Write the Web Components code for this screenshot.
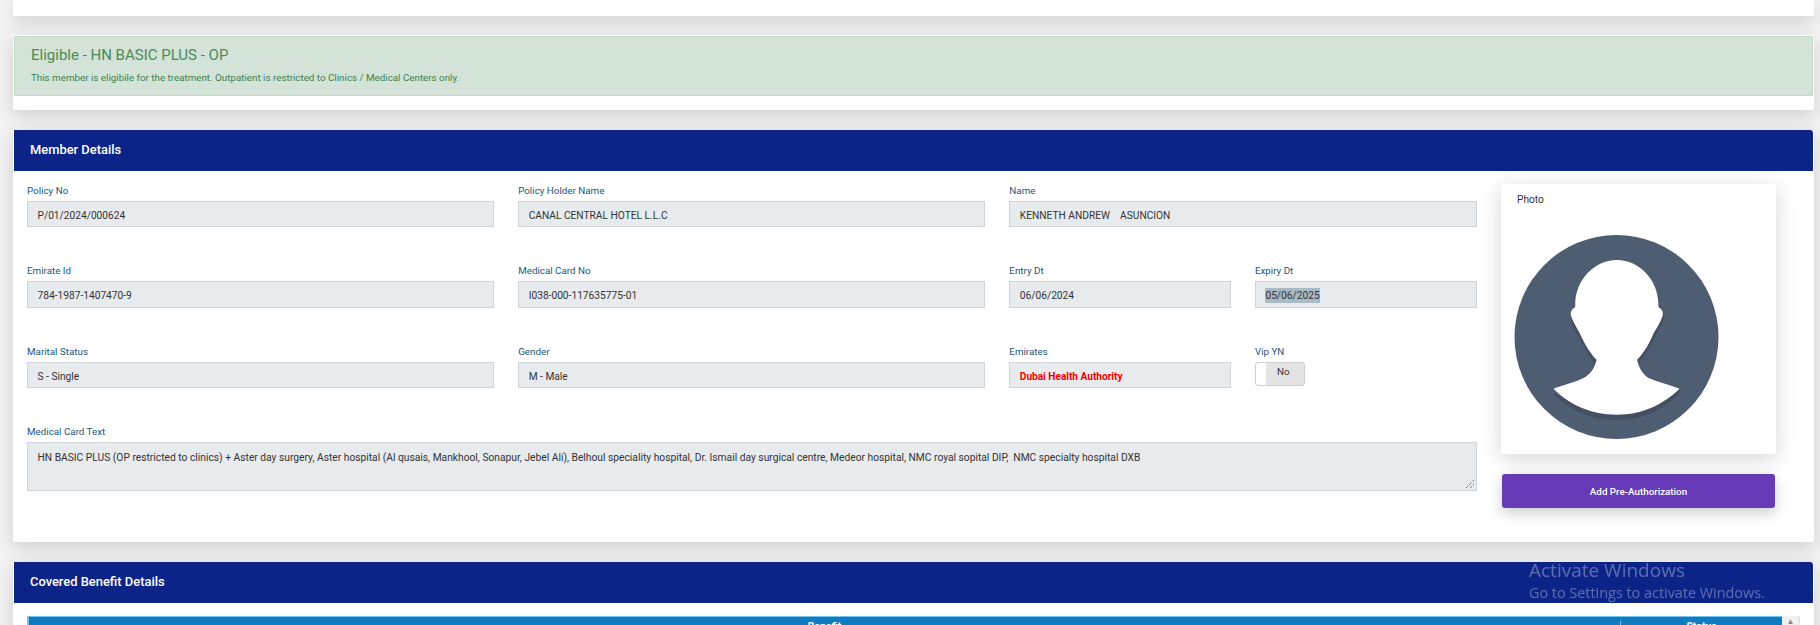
<!DOCTYPE html>
<html>
<head>
<meta charset="utf-8">
<title>Member Details</title>
<style>
    html, body { margin: 0; height: 625px; overflow: hidden; }
    body {
        background: #f3f3f3;
        font-family: Roboto, "Liberation Sans", sans-serif;
        display: flex;
        flex-direction: column;
        padding: 0 6px 0 13px;
        box-sizing: border-box;
    }
</style>
</head>
<body>
<app-card style="height:16px;margin-bottom:19px"></app-card>

<app-card style="height:75px;margin-bottom:20px">
    <alert-box heading="Eligible - HN BASIC PLUS - OP">This member is eligibile for the treatment. Outpatient is restricted to Clinics / Medical Centers only.</alert-box>
</app-card>

<app-card style="height:412px;margin-bottom:20px">
    <section-header>Member Details</section-header>
    <member-form>
        <form-field span="2" label="Policy No">P/01/2024/000624</form-field>
        <form-field span="2" label="Policy Holder Name">CANAL CENTRAL HOTEL L.L.C</form-field>
        <form-field span="2" label="Name">KENNETH ANDREW    ASUNCION</form-field>
        <form-field span="2" label="Emirate Id" tall>784-1987-1407470-9</form-field>
        <form-field span="2" label="Medical Card No" tall>I038-000-117635775-01</form-field>
        <form-field label="Entry Dt" tall>06/06/2024</form-field>
        <form-field label="Expiry Dt" tall selected>05/06/2025</form-field>
        <form-field span="2" label="Marital Status">S - Single</form-field>
        <form-field span="2" label="Gender">M - Male</form-field>
        <form-field label="Emirates" danger>Dubai Health Authority</form-field>
        <form-field label="Vip YN" plain><toggle-switch>No</toggle-switch></form-field>
        <form-field span="6" label="Medical Card Text" multiline>HN BASIC PLUS (OP restricted to clinics) + Aster day surgery, Aster hospital (Al qusais, Mankhool, Sonapur, Jebel Ali), Belhoul speciality hospital, Dr. Ismail day surgical centre, Medeor hospital, NMC royal sopital DIP,  NMC specialty hospital DXB</form-field>
        <photo-card slot="side">Photo</photo-card>
        <action-button slot="side">Add Pre-Authorization</action-button>
    </member-form>
</app-card>

<app-card style="flex:none;height:200px">
    <section-header>Covered Benefit Details</section-header>
    <benefit-table></benefit-table>
</app-card>

<activate-notice></activate-notice>

<script>
class AppCard extends HTMLElement {
    connectedCallback() {
        this.attachShadow({ mode: 'open' }).innerHTML = `
            <style>
                :host {
                    display: block;
                    flex: none;
                    background: #fff;
                    box-sizing: border-box;
                    padding: 0 1px;
                    box-shadow: 0 6px 18px rgba(0,0,0,0.15);
                }
            </style>
            <slot></slot>`;
    }
}

class AlertBox extends HTMLElement {
    connectedCallback() {
        this.attachShadow({ mode: 'open' }).innerHTML = `
            <style>
                :host {
                    display: block;
                    height: 60px;
                    margin-top: 1px;
                    box-sizing: border-box;
                    padding: 9px 16px 0 16px;
                    background: #d4e3d7;
                    border: 1px solid #c5d9cb;
                    color: #3f7f4f;
                }
                h4 { margin: 0 0 8px; font-size: 15px; line-height: 18px; font-weight: 400; color: #4a8a5a; }
                p { margin: 0; font-size: 9.8px; line-height: 12px; }
            </style>
            <h4>${this.getAttribute('heading')}</h4>
            <p><slot></slot></p>`;
    }
}

class SectionHeader extends HTMLElement {
    connectedCallback() {
        this.attachShadow({ mode: 'open' }).innerHTML = `
            <style>
                :host {
                    display: flex;
                    align-items: center;
                    height: 41px;
                    box-sizing: border-box;
                    padding: 0 0 2px 16px;
                    background: #0c2488;
                    border-top-right-radius: 3px;
                    color: #fff;
                    font-size: 12.9px;
                    font-weight: 500;
                }
            </style>
            <slot></slot>`;
    }
}

class MemberForm extends HTMLElement {
    connectedCallback() {
        this.attachShadow({ mode: 'open' }).innerHTML = `
            <style>
                :host { display: flex; padding: 13px 0 0 13px; gap: 24px; }
                .fields {
                    width: 1450px;
                    display: grid;
                    grid-template-columns: repeat(5, 221.6fr) 222.1fr;
                    grid-template-rows: 80px 81px 80px auto;
                    column-gap: 24px;
                }
                .side { width: 275px; display: flex; flex-direction: column; gap: 20px; }
            </style>
            <div class="fields"><slot></slot></div>
            <div class="side"><slot name="side"></slot></div>`;
    }
}

class FormField extends HTMLElement {
    connectedCallback() {
        const span = this.getAttribute('span') || 1;
        const value = this.hasAttribute('selected') ? '<span class="sel"><slot></slot></span>' : '<slot></slot>';
        const box = this.hasAttribute('plain') ? '<slot></slot>' : `<div class="box">${value}${this.hasAttribute('multiline') ? `
            <svg class="grip" width="10" height="10" viewBox="0 0 10 10"><path d="M1 9 9 1M5 9 9 5" stroke="#444" stroke-width="1" stroke-dasharray="1 1" fill="none"/></svg>` : ''}</div>`;
        this.attachShadow({ mode: 'open' }).innerHTML = `
            <style>
                :host { display: block; grid-column: span ${span}; min-width: 0; }
                label { display: block; height: 17px; font-size: 9.8px; line-height: 14px; color: #1d5678; }
                .box {
                    position: relative;
                    height: 26px;
                    box-sizing: border-box;
                    padding: 0 9.5px;
                    background: #e8ebee;
                    border: 1px solid #d0d5d9;
                    font-size: 10.2px;
                    line-height: 27px;
                    color: #333;
                    white-space: pre-wrap;
                }
                :host([tall]) .box { height: 27px; }
                :host([danger]) .box { color: #f00000; font-weight: 700; font-size: 10.1px; }
                :host([multiline]) .box { height: 49px; padding-top: 3px; line-height: 24px; font-size: 10.25px; }
                .sel { background: #a9b9c6; padding: 2px 0; }
                .grip { position: absolute; right: 1px; bottom: 1px; }
            </style>
            <label>${this.getAttribute('label')}</label>
            ${box}`;
    }
}

class ToggleSwitch extends HTMLElement {
    connectedCallback() {
        this.attachShadow({ mode: 'open' }).innerHTML = `
            <style>
                :host {
                    display: flex;
                    width: 50px;
                    height: 24px;
                    box-sizing: border-box;
                    background: #e4e4e4;
                    border: 1px solid #cfcfcf;
                    border-radius: 3px;
                    font-size: 9.8px;
                    color: #333;
                }
                .knob { width: 10px; background: #fff; border-radius: 3px 0 0 3px; }
                .text { flex: 1; text-align: center; line-height: 17px; padding-right: 3px; }
            </style>
            <div class="knob"></div>
            <div class="text"><slot></slot></div>`;
    }
}

class PhotoCard extends HTMLElement {
    connectedCallback() {
        this.attachShadow({ mode: 'open' }).innerHTML = `
            <style>
                :host {
                    display: block;
                    height: 270px;
                    box-sizing: border-box;
                    padding: 10px 0 0 16px;
                    background: #fff;
                    box-shadow: 0 5px 20px rgba(0,0,0,0.17);
                    font-size: 10.2px;
                    line-height: 12px;
                    color: #333;
                }
                svg { display: block; margin: 29px 0 0 -3px; }
            </style>
            <slot></slot>
            <svg width="205" height="204" viewBox="102 195 614 613">
                <defs>
                    <clipPath id="disc"><circle cx="409" cy="501.5" r="306.5"/></clipPath>
                    <path id="bust" d="M410 270C341 270 287 331 285 400L285 412C272 418 268 432 275 445C282 462 290 475 297 487C310 515 325 545 349 570C345 590 335 612 310 625C285 638 250 645 220 657C265 705 335 735 410 735C485 735 550 705 598 657C570 645 535 638 505 625C485 612 475 590 471 570C495 545 510 515 522 487C530 475 538 462 545 445C552 432 548 418 535 412L535 400C533 331 479 270 410 270Z"/>
                </defs>
                <circle cx="409" cy="501.5" r="306.5" fill="#4f5d73"/>
                <use href="#bust" y="16" fill="#454f62" clip-path="url(#disc)"/>
                <use href="#bust" x="4" y="8" fill="#454f62" clip-path="url(#disc)"/>
                <use href="#bust" fill="#fff"/>
            </svg>`;
    }
}

class ActionButton extends HTMLElement {
    connectedCallback() {
        this.attachShadow({ mode: 'open' }).innerHTML = `
            <style>
                :host {
                    display: flex;
                    align-items: center;
                    justify-content: center;
                    height: 34px;
                    margin: 0 1px;
                    background: #673ab7;
                    border-radius: 3px;
                    box-shadow: 0 5px 14px rgba(0,0,0,0.2);
                    color: #fff;
                    font-size: 9.8px;
                    font-weight: 500;
                }
            </style>
            <slot></slot>`;
    }
}

class BenefitTable extends HTMLElement {
    connectedCallback() {
        this.attachShadow({ mode: 'open' }).innerHTML = `
            <style>
                :host { display: flex; margin: 13px 13px 0 13px; height: 40px; }
                .head {
                    flex: 1;
                    display: flex;
                    background: #0f7cc2;
                    border-top: 1px solid #74c3ee;
                    border-left: 2px solid #74c3ee;
                    color: #fff;
                    font-size: 10.4px;
                    font-weight: 700;
                    line-height: 12px;
                    padding-top: 4px;
                }
                .benefit { flex: 1; text-align: center; }
                .status { width: 161px; text-align: center; border-left: 1px solid #7fbfe6; }
                .bar { width: 18px; background: #f1f1f1; color: #888; font-size: 8px; text-align: center; line-height: 12px; border-right: 1px solid #dde; box-sizing: border-box; }
            </style>
            <div class="head"><div class="benefit">Benefit</div><div class="status">Status</div></div>
            <div class="bar">▲</div>`;
    }
}

class ActivateNotice extends HTMLElement {
    connectedCallback() {
        this.attachShadow({ mode: 'open' }).innerHTML = `
            <style>
                :host {
                    position: fixed;
                    left: 1529px;
                    top: 557px;
                    color: rgba(255,255,255,0.33);
                    font-family: "Open Sans", sans-serif;
                    white-space: nowrap;
                }
                .title { font-size: 19px; line-height: 26px; }
                .hint { font-size: 14.4px; line-height: 19px; }
            </style>
            <div class="title">Activate Windows</div>
            <div class="hint">Go to Settings to activate Windows.</div>`;
    }
}

customElements.define('app-card', AppCard);
customElements.define('alert-box', AlertBox);
customElements.define('section-header', SectionHeader);
customElements.define('member-form', MemberForm);
customElements.define('form-field', FormField);
customElements.define('toggle-switch', ToggleSwitch);
customElements.define('photo-card', PhotoCard);
customElements.define('action-button', ActionButton);
customElements.define('benefit-table', BenefitTable);
customElements.define('activate-notice', ActivateNotice);
</script>
</body>
</html>
